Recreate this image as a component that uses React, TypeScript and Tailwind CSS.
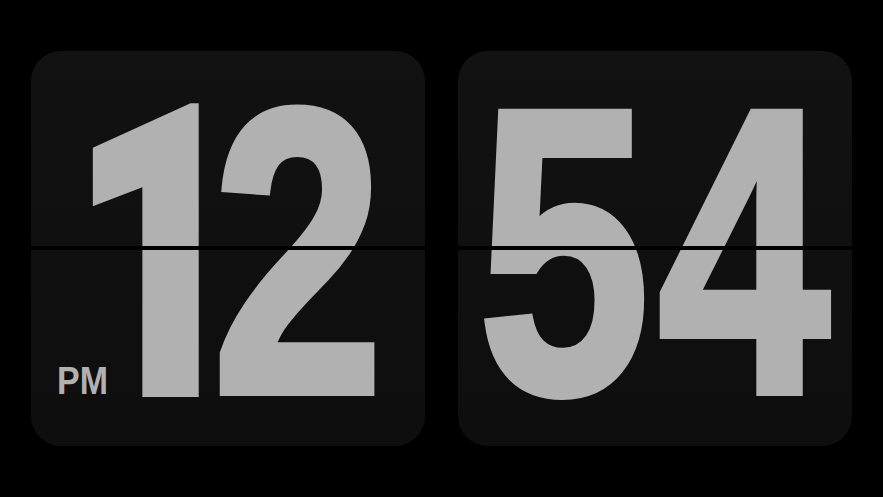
type Digit = {
  char: string;
  box: string;
  face: string;
};

type FlipCardProps = {
  digits: Digit[];
  shift: string;
  meridiem?: string;
};

function FlipCard({ digits, shift, meridiem }: FlipCardProps) {
  return (
    <div className="relative h-[395px] w-[394px] shrink-0 overflow-hidden rounded-[30px] bg-gradient-to-b from-[#121212] to-[#0e0e0e]">
      <div className={`flex justify-center pt-[50px] ${shift}`}>
        {digits.map((digit, index) => (
          <div key={index} className={`flex justify-center ${digit.box}`}>
            <span
              className={`block shrink-0 origin-center scale-x-[0.76] leading-[300px] text-[#b1b1b1] [-webkit-text-stroke:8px_#b1b1b1] ${digit.face}`}
            >
              {digit.char}
            </span>
          </div>
        ))}
      </div>
      <div className="absolute inset-x-0 top-[195px] h-[4px] bg-black" />
      {meridiem ? (
        <span className="absolute bottom-[46px] left-[26px] z-10 origin-left scale-x-[0.87] font-['Liberation_Sans',Arial,sans-serif] text-[39px] font-bold leading-none text-[#b1b1b1]">
          {meridiem}
        </span>
      ) : null}
    </div>
  );
}

const liberation = "font-['Liberation_Sans',Arial,sans-serif] text-[406px] font-bold";
const roboto = "mt-[5px] font-['Roboto',sans-serif] text-[402px] font-black";

export default function App() {
  return (
    <div className="flex h-[497px] w-[883px] items-center justify-center gap-[33px] bg-black">
      <FlipCard
        digits={[
          { char: "1", box: "w-[156px] pl-[34px]", face: roboto },
          { char: "2", box: "w-[156px]", face: liberation }
        ]}
        shift="pr-[16px]"
        meridiem="PM"
      />
      <FlipCard
        digits={[
          { char: "5", box: "w-[180px]", face: liberation },
          { char: "4", box: "w-[180px]", face: liberation }
        ]}
        shift="pr-[2px]"
      />
    </div>
  );
}
